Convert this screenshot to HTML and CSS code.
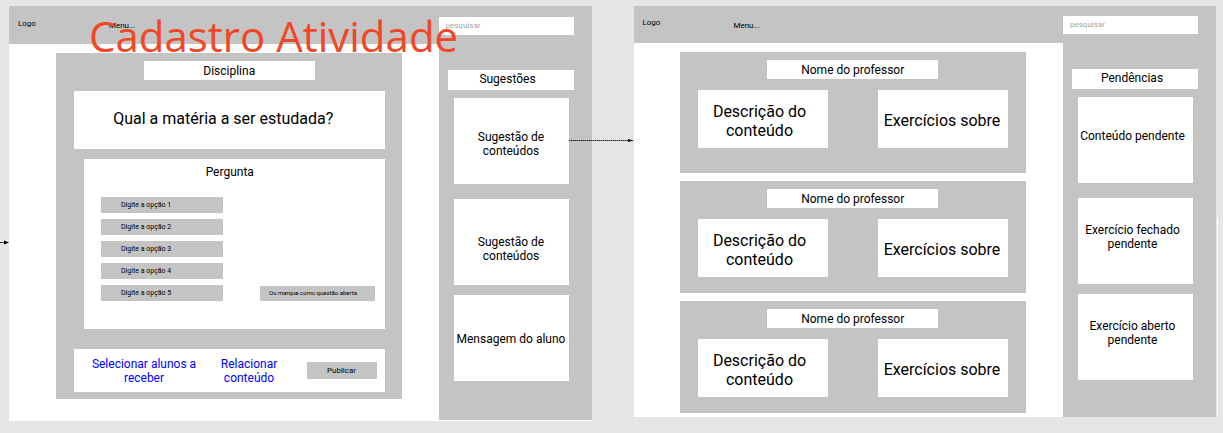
FILE: index.html
```html
<!DOCTYPE html>
<html lang="pt-BR">
<head>
<meta charset="utf-8">
<title>Cadastro Atividade</title>
<link rel="stylesheet" href="styles.css">
</head>
<body>
<main class="board">
  <section class="frame frame-activity">
    <h1 class="frame-title">Cadastro Atividade</h1>
    <svg class="arrow arrow-in" width="9" height="7" viewBox="0 0 9 7" aria-hidden="true"><path d="M0 3.5H7" stroke="#222" stroke-dasharray="2 .5"/><path d="M4 1.5 9 3.5 4 5.5Z"/></svg>
    <div class="content">
      <header class="topbar"><a class="logo" href="#">Logo</a><a class="menu" href="#">Menu...</a></header>
      <form class="panel">
        <h2 class="label">Disciplina</h2>
        <p class="question">Qual a matéria a ser estudada?</p>
        <section class="answers">
          <h3 class="answers-title">Pergunta</h3>
          <div class="answers-body">
            <div class="options">
              <input class="option" type="text" aria-label="Opção 1" placeholder="Digite a opção 1">
              <input class="option" type="text" aria-label="Opção 2" placeholder="Digite a opção 2">
              <input class="option" type="text" aria-label="Opção 3" placeholder="Digite a opção 3">
              <input class="option" type="text" aria-label="Opção 4" placeholder="Digite a opção 4">
              <input class="option" type="text" aria-label="Opção 5" placeholder="Digite a opção 5">
            </div>
            <button class="open-question" type="button">Ou marque como questão aberta</button>
          </div>
        </section>
        <div class="actions">
          <a class="action-students" href="#">Selecionar alunos a receber</a>
          <a class="action-content" href="#">Relacionar conteúdo</a>
          <button class="publish" type="button">Publicar</button>
        </div>
      </form>
    </div>
    <aside class="side">
      <input class="search" type="search" aria-label="Pesquisar" placeholder="pesquisar">
      <h2 class="side-title">Sugestões</h2>
      <p class="card card-upper">Sugestão de conteúdos</p>
      <p class="card card-middle">Sugestão de conteúdos</p>
      <p class="card">Mensagem do aluno</p>
    </aside>
  </section>

  <section class="frame frame-pending">
    <svg class="arrow arrow-link" width="65" height="7" viewBox="0 0 65 7" aria-hidden="true"><path d="M0 3.5H62" stroke="#222" stroke-dasharray="1.5 .5"/><path d="M59 2 65 3.5 59 5Z"/></svg>
    <div class="content">
      <header class="topbar"><a class="logo" href="#">Logo</a><a class="menu" href="#">Menu...</a></header>
      <div class="teachers">
        <article class="teacher">
          <h2 class="label">Nome do professor</h2>
          <div class="tiles"><p class="tile">Descrição do conteúdo</p><p class="tile">Exercícios sobre</p></div>
        </article>
        <article class="teacher">
          <h2 class="label">Nome do professor</h2>
          <div class="tiles"><p class="tile">Descrição do conteúdo</p><p class="tile">Exercícios sobre</p></div>
        </article>
        <article class="teacher">
          <h2 class="label">Nome do professor</h2>
          <div class="tiles"><p class="tile">Descrição do conteúdo</p><p class="tile">Exercícios sobre</p></div>
        </article>
      </div>
    </div>
    <aside class="side">
      <input class="search" type="search" aria-label="Pesquisar" placeholder="pesquisar">
      <h2 class="side-title">Pendências</h2>
      <p class="card">Conteúdo pendente</p>
      <p class="card card-middle">Exercício fechado pendente</p>
      <p class="card">Exercício aberto pendente</p>
    </aside>
  </section>
</main>
</body>
</html>
```
FILE: styles.css
```css
* {
  box-sizing: border-box;
}

body {
  margin: 0;
  background: #e5e5e5;
  color: #000;
  font: 12px/14px Roboto, "Liberation Sans", sans-serif;
}

h1, h2, h3, p {
  margin: 0;
  font-size: inherit;
  font-weight: 400;
}

a {
  color: inherit;
  text-decoration: none;
}

input, button {
  min-width: 0;
  margin: 0;
  padding: 0;
  border: 0;
  border-radius: 0;
  font-family: inherit;
  color: inherit;
  appearance: none;
}

.board {
  display: flex;
  align-items: flex-start;
  gap: 42px;
  padding: 6px 7px 12px 9px;
}

.frame {
  position: relative;
  display: flex;
  flex: 1;
  min-width: 0;
  background: #fff;
}

.frame-activity {
  padding-bottom: 1px;
}

/* Thin highlight beside the lower half of the pending frame */
.frame-pending::after {
  content: "";
  position: absolute;
  top: 212px;
  bottom: 0;
  left: calc(100% + 1px);
  width: 1px;
  background: #fff;
}

.frame-title {
  position: absolute;
  top: 2px;
  left: 80px;
  font: 400 42px/56px "Open Sans", "Noto Sans", sans-serif;
  color: #f24726;
  white-space: nowrap;
}

.arrow {
  position: absolute;
  right: 100%;
}

.arrow-in {
  top: 233px;
}

.arrow-link {
  top: 131px;
}

.content {
  flex: 1;
  min-width: 0;
}

.topbar {
  display: flex;
  gap: 73px;
  height: 38px;
  padding-left: 9px;
  background: #c4c4c4;
  font-size: 8px;
  line-height: 10px;
}

.logo {
  padding-top: 13px;
}

.menu {
  padding-top: 15px;
}

.frame-pending .topbar {
  height: 37px;
}

.frame-pending .logo {
  padding-top: 12px;
}

.panel {
  margin: 9px 37px 0 47px;
  padding: 8px 17px 7px 18px;
  background: #c4c4c4;
}

.label {
  width: 171px;
  margin: 0 auto;
  padding-top: 2px;
  background: #fff;
  line-height: 17px;
  text-align: center;
}

.question {
  margin-top: 11px;
  padding: 18px 12px 20px 0;
  background: #fff;
  font-size: 16px;
  line-height: 20px;
  text-align: center;
}

.answers {
  margin: 10px 0 0 10px;
  padding: 6px 10px 28px 17px;
  background: #fff;
}

.answers-title {
  padding-right: 16px;
  text-align: center;
}

.answers-body {
  display: flex;
  align-items: flex-end;
  justify-content: space-between;
  margin-top: 18px;
}

.options {
  display: flex;
  flex-direction: column;
  gap: 6px;
  width: 122px;
}

.option {
  height: 16px;
  padding: 0 0 0 20px;
  background: #c4c4c4;
  font-size: 7px;
}

.option::placeholder {
  color: #000;
  opacity: 1;
}

.open-question {
  width: 115px;
  height: 15px;
  padding: 0 8px 2px 0;
  background: #c4c4c4;
  font-size: 6px;
}

.actions {
  display: flex;
  align-items: center;
  height: 43px;
  margin-top: 20px;
  padding: 0 8px 0 10px;
  background: #fff;
  color: #00f;
  text-align: center;
}

.action-students {
  width: 120px;
}

.action-content {
  width: 90px;
  padding: 0 10px;
}

.publish {
  width: 70px;
  height: 17px;
  margin-left: auto;
  background: #c4c4c4;
  color: #000;
  font-size: 8px;
}

.side {
  display: flex;
  flex-direction: column;
  width: 153px;
  padding: 11px 18px 39px 0;
  background: #c4c4c4;
}

.frame-pending .side {
  padding: 10px 18px 36px 0;
}

.search {
  height: 18px;
  padding: 0 7px 1px;
  background: #fff;
  font-size: 8px;
}

.search::placeholder {
  color: #a6a6a6;
  opacity: 1;
}

.side-title {
  margin: 35px 0 8px 9px;
  padding: 0 6px 2px 0;
  background: #fff;
  line-height: 18px;
  text-align: center;
}

.card {
  display: flex;
  align-items: center;
  justify-content: center;
  height: 86px;
  margin: 0 5px 10px 15px;
  padding-top: 2px;
  background: #fff;
  text-align: center;
}

.card:last-child {
  margin-bottom: 0;
}

.card-upper {
  padding: 6px 16px 0;
}

.card-middle {
  margin-top: 5px;
}

.frame-activity .card-middle {
  padding: 14px 16px 0;
}

.frame-pending .card {
  padding: 0 6px 8px 0;
}

.teachers {
  display: flex;
  flex-direction: column;
  gap: 8px;
  padding: 9px 37px 4px 46px;
}

.teacher {
  padding: 8px 18px 16px;
  background: #c4c4c4;
}

.teacher:first-child {
  padding-bottom: 25px;
}

.tiles {
  display: flex;
  justify-content: space-between;
  margin-top: 11px;
}

.tile {
  display: flex;
  align-items: center;
  justify-content: center;
  width: 130px;
  height: 58px;
  padding: 3px 6px 0 0;
  background: #fff;
  font-size: 16px;
  line-height: 19px;
  text-align: center;
}

.tile + .tile {
  padding: 2px 2px 0 0;
}
```
